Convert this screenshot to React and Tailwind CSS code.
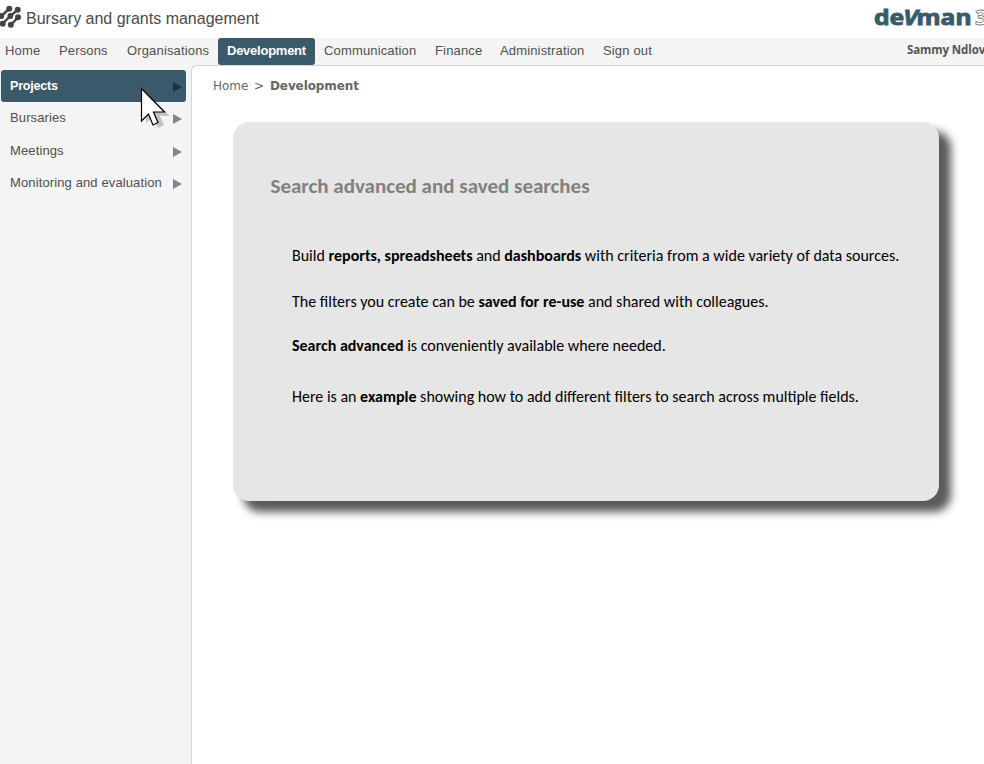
const nav = [
  ["Home", "w-[50px]"],
  ["Persons", "w-[68px]"],
  ["Organisations", "w-[100px]"],
  ["Development", "w-[97px]"],
  ["Communication", "w-[111px]"],
  ["Finance", "w-[65px]"],
  ["Administration", "w-[103px]"],
  ["Sign out", "w-[68px]"],
];

const side = [
  ["Projects", "h-[32px]"],
  ["Bursaries", "h-[32px]"],
  ["Meetings", "h-[33px]"],
  ["Monitoring and evaluation", "h-[32px]"],
];

function Dots() {
  return (
    <svg width="21" height="23" viewBox="0 0 21 23" className="shrink-0" fill="#444">
      <path d="M1.500 11L9.300 3.700M2.700 18.500L10.500 11L17.700 4.700M10.700 20L18 12.500" fill="none" stroke="#444" strokeWidth="2.400" />
      <circle cx="9.300" cy="3.700" r="3" /><circle cx="1.200" cy="11" r="3" />
      <circle cx="17.700" cy="4.700" r="3" /><circle cx="10.300" cy="11" r="2.900" /><circle cx="2.700" cy="18.700" r="3" />
      <circle cx="18" cy="12.300" r="3" /><circle cx="10.800" cy="19.700" r="3" />
    </svg>
  );
}

function Cursor() {
  return (
    <svg width="32" height="44" viewBox="0 0 32 44" className="absolute left-[140px] top-[86px]">
      <path d="M6 7v30l7-6 5 11 6-3-4-9h10z" fill="#000" opacity=".2" />
      <path d="M1.500 2.500v32.500l7-7 4.500 11 5-2.500-4.500-10.500h11z" fill="#fff" stroke="#000" strokeWidth="1.200" />
    </svg>
  );
}

export default function App() {
  return (
    <div className="relative flex h-[764px] w-[984px] flex-col overflow-hidden bg-white font-['Liberation_Sans',sans-serif] text-[#505050]">
      <header className="flex h-[38px] shrink-0 items-start justify-between whitespace-nowrap">
        <div className="flex pt-[5px]">
          <Dots />
          <h1 className="ml-[5px] text-[16px] leading-[27px] text-[#4a4a4a]">Bursary and grants management</h1>
        </div>
        <div className="flex w-[110px] pt-[2px] font-['Noto_Sans',sans-serif] text-[22px] leading-[28px] text-[#3a5a6a]">
          <span className="mr-[15px] w-[86px] origin-left scale-x-[1.12] font-bold [-webkit-text-stroke:0.9px_#3a5a6a]">de<i className="-ml-[1px]">V</i><span className="-ml-[1px]">man</span></span>
          <span className="font-['Open_Sans',sans-serif] font-bold text-white [-webkit-text-stroke:0.8px_#777]">3</span>
        </div>
      </header>
      <nav className="flex h-[27px] shrink-0 justify-between whitespace-nowrap bg-[#f4f4f4] text-[13px] leading-[25px] tracking-[0.15px]">
        <div className="flex">
          {nav.map(([label, width]) => (
            <a key={label} className={`${width} ${label === "Home" ? "pl-[5px]" : "pl-[9px]"} ${label === "Development" ? "rounded-[3px] bg-[#3a5a6b] font-bold tracking-[-0.25px] text-white" : ""}`}>{label}</a>
          ))}
        </div>
        <div className="w-[77px] font-['Open_Sans',sans-serif] text-[11.500px] font-bold leading-[24px] tracking-[-0.1px] text-[#555]">Sammy Ndlov</div>
      </nav>
      <div className="flex min-h-0 flex-1 bg-[#f4f4f4]">
        <aside className="w-[191px] shrink-0 pl-px pt-[5px] text-[13px] tracking-[0.12px]">
          {side.map(([label, height], i) => (
            <div key={label} className={`flex w-[185px] items-center justify-between rounded-[3px] pl-[9px] pr-[4px] ${height} ${i === 0 ? "bg-[#3a5a6b] text-white" : ""}`}>
              <span className={i === 0 ? "text-[12.500px] font-bold tracking-[-0.2px]" : ""}>{label}</span>
              <svg width="9" height="10" className={`mt-[2px] ${i === 0 ? "text-[#20343f]" : "text-[#858585]"}`}><path d="M0 0L9 5L0 10z" fill="currentColor" /></svg>
            </div>
          ))}
        </aside>
        <main className="flex-1 rounded-tl-[6px] border-l border-t border-[#d4d4d4] bg-white">
          <div className="flex pl-[21px] pt-[10px] font-['DejaVu_Sans',sans-serif] text-[12px] leading-[20px] text-[#666]">
            <span className="w-[41px]">Home</span><span className="w-[16px]">&gt;</span><b className="tracking-[-0.1px]">Development</b>
          </div>
          <section className="ml-[41px] mt-[26px] h-[379px] w-[706px] whitespace-nowrap rounded-[16px] bg-[#e6e6e6] pl-[37.500px] pt-[50px] font-['Carlito','Lato',sans-serif] text-black shadow-[11px_10px_8px_1px_#5a5a5a]">
            <h2 className="text-[21px] font-bold leading-[28px] text-[#808080]">Search advanced and saved searches</h2>
            <div className="ml-[21.500px] pt-[46px] text-[16px] leading-[20px]">
              <p>Build <b>reports, spreadsheets</b> and <b>dashboards</b> with criteria from a wide variety of data sources.</p>
              <p className="mt-[26px]">The filters you create can be <b>saved for re-use</b> and shared with colleagues.</p>
              <p className="mt-[24px]"><b>Search advanced</b> is conveniently available where needed.</p>
              <p className="mt-[31px]">Here is an <b>example</b> showing how to add different filters to search across multiple fields.</p>
            </div>
          </section>
        </main>
      </div>
      <Cursor />
    </div>
  );
}
